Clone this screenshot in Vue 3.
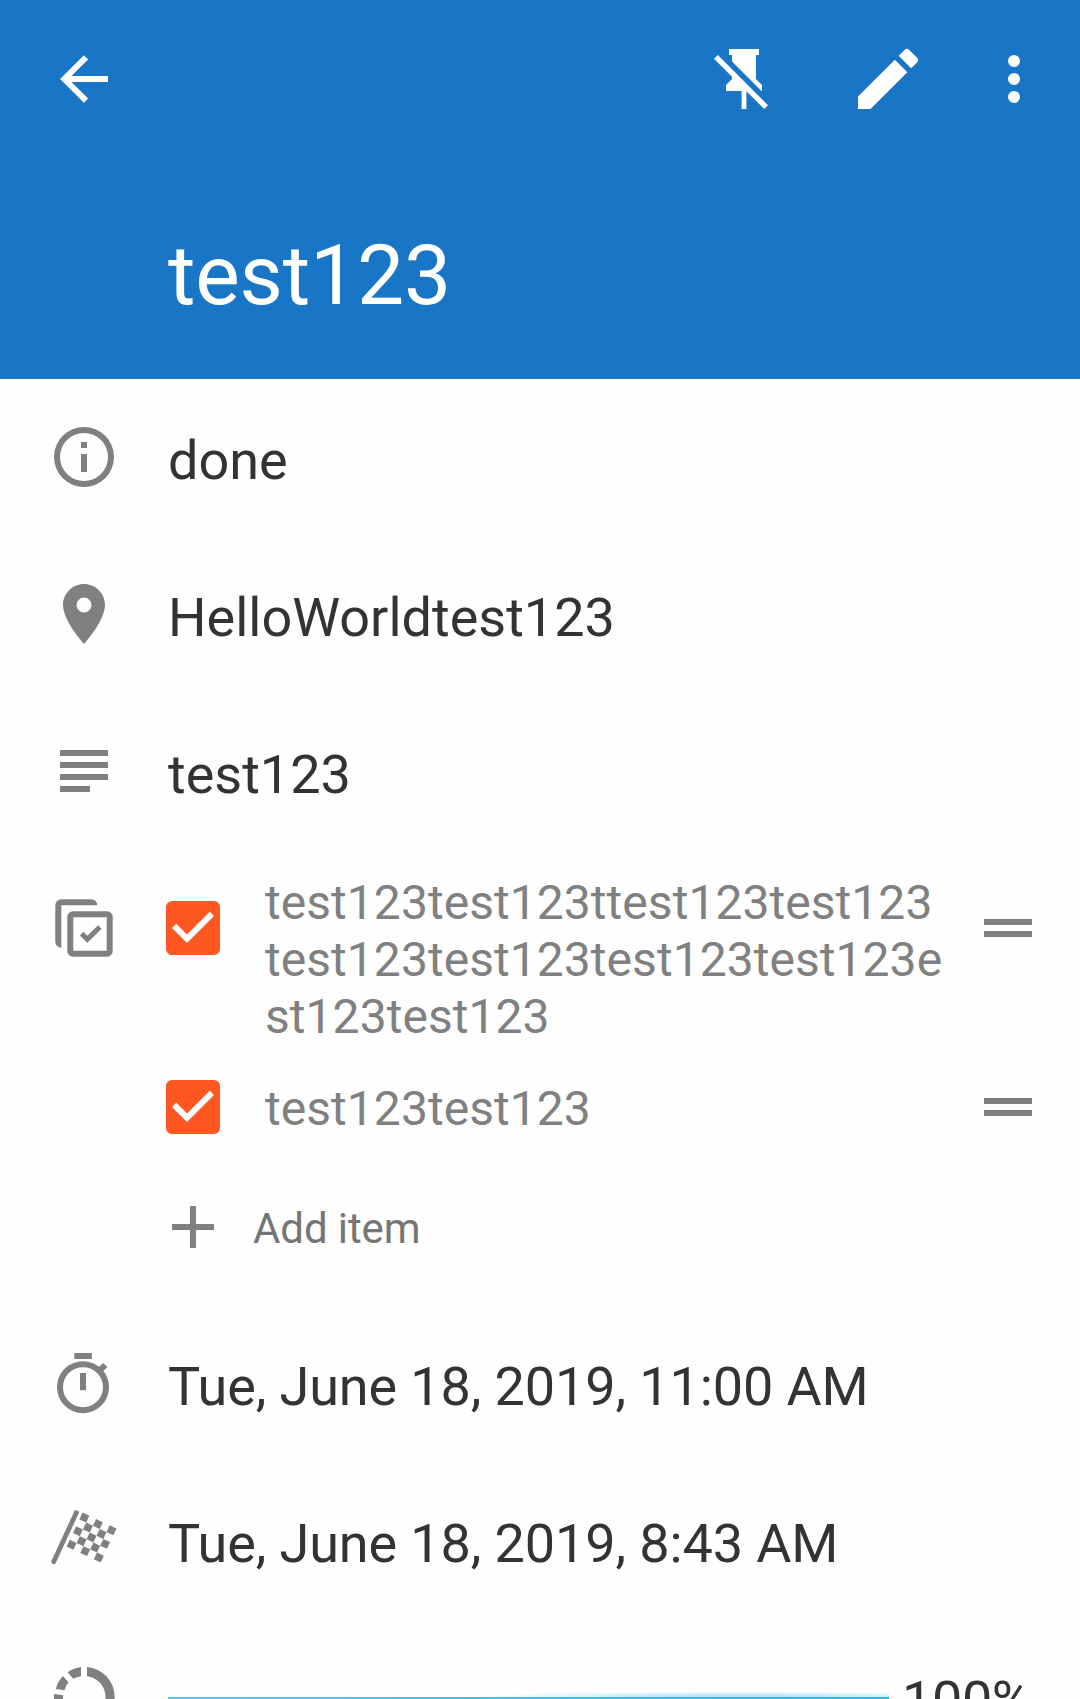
<script setup>
const items = [
  'test123test123ttest123test123test123test123test123test123est123test123',
  'test123test123',
]

const squares = []
for (let r = 0; r < 5; r++) {
  for (let c = 0; c < 5; c++) {
    if ((r + c) % 2 === 0) squares.push([c, r])
  }
}
</script>

<template>
  <div class="page">
    <header class="header">
      <div class="toolbar">
        <svg class="icon" viewBox="0 0 72 72" fill="none" stroke="currentColor" stroke-width="6">
          <path d="M38 14.3 16.3 36 38 57.7M17 36h43" />
        </svg>
        <span class="spacer"></span>
        <svg class="icon pin" viewBox="0 0 24 24">
          <path d="M2 5.27 3.28 4 20 20.72 18.73 22 12.8 16.07V22h-1.6v-6H6v-2l2-2v-.73l-6-6M16 12l2 2v2h-.18L8 6.18V4H7V2h10v2h-1z" />
        </svg>
        <svg class="edit" viewBox="0 0 24 24">
          <path d="M3 17.25V21h3.75L17.81 9.94l-3.75-3.75L3 17.25zM20.71 7.04a1 1 0 0 0 0-1.41l-2.34-2.34a1 1 0 0 0-1.41 0L15.2 5.05 18.95 8.8z" />
        </svg>
        <svg class="icon" viewBox="0 0 24 24">
          <circle cx="12" cy="6" r="2" /><circle cx="12" cy="12" r="2" /><circle cx="12" cy="18" r="2" />
        </svg>
      </div>
      <h1>test123</h1>
    </header>

    <main>
      <section class="row">
        <svg class="icon" viewBox="0 0 24 24">
          <path d="M11 7h2v2h-2zm0 4h2v6h-2zm1-9a10 10 0 1 0 0 20 10 10 0 0 0 0-20zm0 18a8 8 0 1 1 0-16 8 8 0 0 1 0 16z" />
        </svg>
        <p>done</p>
      </section>
      <section class="row">
        <svg class="icon" viewBox="0 0 24 24">
          <path d="M12 2C8.13 2 5 5.13 5 9c0 5.25 7 13 7 13s7-7.75 7-13c0-3.87-3.13-7-7-7zm0 9.5a2.5 2.5 0 0 1 0-5 2.5 2.5 0 0 1 0 5z" />
        </svg>
        <p>HelloWorldtest123</p>
      </section>
      <section class="row">
        <svg class="icon" viewBox="0 0 24 24">
          <path d="M4 5h16v2H4zM4 9h16v2H4zM4 13h16v2H4zM4 17h10v2H4z" />
        </svg>
        <p>test123</p>
      </section>

      <section class="checklist">
        <svg class="icon" viewBox="0 0 72 72">
          <path d="M7.3 49.7V13.3a6 6 0 0 1 6-6h30a6 6 0 0 1 6 6h-36v42.4a6 6 0 0 1-6-6z" />
          <rect x="22.3" y="22.3" width="39.4" height="39.4" rx="2.5" fill="none" stroke="currentColor" stroke-width="6" />
          <path d="m33.6 41.6 5.8 5.7 12.4-12.4" fill="none" stroke="currentColor" stroke-width="5" />
        </svg>
        <div class="items">
          <div v-for="(item, i) in items" :key="i" class="item">
            <svg class="icon check" viewBox="0 0 24 24">
              <path d="M19 3H5a2 2 0 0 0-2 2v14c0 1.1.9 2 2 2h14a2 2 0 0 0 2-2V5a2 2 0 0 0-2-2zm-9 14-5-5 1.41-1.41L10 14.17l7.59-7.59L19 8l-9 9z" />
            </svg>
            <p>{{ item }}</p>
            <svg class="icon" viewBox="0 0 24 24"><path d="M4 9h16v2H4zM4 13h16v2H4z" /></svg>
          </div>
          <div class="add">
            <svg class="icon" viewBox="0 0 24 24"><path d="M5 11h6V5h2v6h6v2h-6v6h-2v-6H5z" /></svg>
            <span>Add item</span>
          </div>
        </div>
      </section>

      <section class="row date">
        <svg class="icon" viewBox="0 0 72 72" fill="none" stroke="currentColor" stroke-width="6">
          <circle cx="35" cy="39.2" r="23" />
          <path d="M26.3 8h17.6M35 25v17.3M50.8 23.4l6.4-6.4" />
        </svg>
        <p>Tue, June 18, 2019, 11:00 AM</p>
      </section>
      <section class="row date">
        <svg class="icon" viewBox="0 0 72 72">
          <path d="M29.2 5.8 5.7 56.8" fill="none" stroke="currentColor" stroke-width="4.8" />
          <circle cx="5.7" cy="56.8" r="2.4" />
          <g transform="translate(36.3 12.6) rotate(25)">
            <rect v-for="([c, r], i) in squares" :key="i" :x="c * 11.25 - 3.75" :y="r * 7.5 - 3.75" width="7.5" height="7.5" :transform="`translate(${c * -3.75} 0)`" />
          </g>
        </svg>
        <p>Tue, June 18, 2019, 8:43 AM</p>
      </section>
      <section class="row date progress">
        <svg class="icon" viewBox="0 0 24 24">
          <path d="M13 2.03v3.02a7 7 0 0 1 0 13.9v3.02a10 10 0 0 0 0-19.94zM11 2.03a10 10 0 0 0-4.46 1.7L8.4 5.95A7 7 0 0 1 11 5.05zM4.96 5.02A10 10 0 0 0 2.6 9.3l2.9.42A7 7 0 0 1 6.82 7.1zM2.03 11a10 10 0 0 0 .3 3.6l2.85-.9A7 7 0 0 1 5.05 11.4z" />
        </svg>
        <div class="track"></div>
        <p class="percent">100%</p>
      </section>
    </main>
  </div>
</template>

<style>
body { margin: 0; background: #fefefe; }
</style>

<style scoped>
.page {
  width: 1080px;
  height: 1699px;
  overflow: hidden;
  background: #fefefe;
  font-family: Roboto, sans-serif;
  color: #333;
}
.header {
  box-sizing: border-box;
  height: 379px;
  background: #1976c6;
  color: #fff;
}
.toolbar {
  display: flex;
  align-items: center;
  height: 158px;
  padding: 0 30px 0 48px;
}
.spacer { flex: 1; }
.icon {
  display: block;
  flex: none;
  width: 72px;
  height: 72px;
  color: #808080;
}
svg:not([fill]) { fill: currentColor; }
.header svg { color: #fff; }
.pin { margin-right: 68px; }
.edit { width: 80px; height: 80px; margin-right: 50px; }
h1 {
  margin: 68px 0 0 168px;
  font-size: 84px;
  font-weight: 400;
  line-height: 100px;
  letter-spacing: -0.2px;
}
p { margin: 0; }
main { padding-top: 42px; }
.row {
  display: flex;
  height: 157px;
  padding-left: 48px;
}
.row p {
  margin: 8px 0 0 48px;
  font-size: 54px;
  line-height: 64px;
  white-space: nowrap;
}
.row.date p { margin-top: 7px; letter-spacing: -0.12px; }
.checklist {
  display: flex;
  height: 456px;
  padding: 0 36px 0 48px;
}
.items { margin-left: 37px; flex: 1; }
.item {
  display: flex;
  min-height: 92px;
}
.item:first-child { height: 179px; }
.item p {
  flex: 1;
  margin: -18px 0 0 36px;
  padding-right: 27px;
  font-size: 48px;
  line-height: 57px;
  letter-spacing: 0.05px;
  color: #808080;
  word-break: break-all;
}
.item:nth-child(2) p { margin-top: 9px; }
.item .check { color: #ff5722; }
.add {
  display: flex;
  align-items: center;
  margin-top: 28px;
  height: 72px;
  font-size: 42px;
  line-height: 50px;
  letter-spacing: -0.1px;
  color: #757575;
}
.add span { margin: 3px 0 0 24px; }
.progress { margin-top: -1px; }
.track {
  flex: none;
  width: 721px;
  height: 20px;
  margin: 28px 0 0 48px;
  background:
    linear-gradient(90deg, #5bc2e9, #33b5e5) 0 8px / 721px 6px no-repeat,
    radial-gradient(ellipse 270px 7px at 570px 9px, rgba(51, 181, 229, 0.5), rgba(51, 181, 229, 0)) no-repeat;
}
.row.date .percent { margin: 8px 0 0 13px; letter-spacing: -0.4px; }
</style>
